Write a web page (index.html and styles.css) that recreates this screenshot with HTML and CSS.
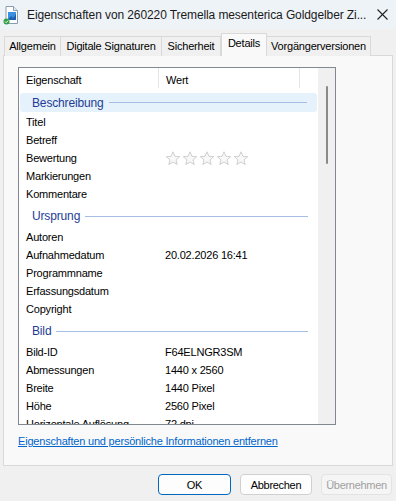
FILE: index.html
```html
<!DOCTYPE html>
<html lang="de">
<head>
    <meta charset="UTF-8">
    <title>Eigenschaften</title>
    <link rel="stylesheet" href="styles.css">
</head>
<body>
    <div class="titlebar">
        <svg class="app-icon" width="16" height="19" viewBox="0 0 16 19">
            <path d="M3 0.5h7.5l4 4v13h-11.5z" fill="#fff" stroke="#8a9bb0"/>
            <path d="M10.5 0.5v4h4" fill="#e6ecf3" stroke="#8a9bb0"/>
            <rect x="5" y="6" width="8" height="8" fill="#3b8fe0"/>
            <path d="M5 14l3-4 2 2 3-4v6z" fill="#1d5fb0"/>
            <circle cx="3.5" cy="15.5" r="3" fill="#2ea043"/>
            <path d="M2 15.5l1.2 1.2 2-2.2" fill="none" stroke="#fff" stroke-width="1"/>
        </svg>
        <span class="title">Eigenschaften von 260220 Tremella mesenterica Goldgelber Zi...</span>
        <svg class="close" width="11" height="11" viewBox="0 0 11 11">
            <path d="M0.5 0.5l10 10M10.5 0.5l-10 10" stroke="#222" stroke-width="1.1"/>
        </svg>
    </div>

    <div class="tabs">
        <div class="tab t1">Allgemein</div>
        <div class="tab t2">Digitale Signaturen</div>
        <div class="tab t3">Sicherheit</div>
        <div class="tab t4 active">Details</div>
        <div class="tab t5">Vorgängerversionen</div>
    </div>

    <div class="panel">
        <div class="list">
            <div class="rows">
                <div class="head">
                    <div class="hcell name">Eigenschaft</div>
                    <div class="hcell val">Wert</div>
                </div>

                <div class="group first hover"><span>Beschreibung</span><i></i></div>
                <div class="row"><span>Titel</span><span></span></div>
                <div class="row"><span>Betreff</span><span></span></div>
                <div class="row"><span>Bewertung</span>
                    <span class="stars">
                        <svg width="84" height="15" viewBox="0 0 84 15">
                            <g fill="#f8f8f8" stroke="#c9c9c9" stroke-width="0.9">
                                <path id="st" d="M7 0.8l1.9 4.5 4.8 0.4-3.7 3.1 1.2 4.7L7 11l-4.2 2.5 1.2-4.7-3.7-3.1 4.8-0.4z"/>
                                <use href="#st" x="17"/>
                                <use href="#st" x="34"/>
                                <use href="#st" x="51"/>
                                <use href="#st" x="68"/>
                            </g>
                        </svg>
                    </span>
                </div>
                <div class="row"><span>Markierungen</span><span></span></div>
                <div class="row"><span>Kommentare</span><span></span></div>

                <div class="group"><span>Ursprung</span><i></i></div>
                <div class="row"><span>Autoren</span><span></span></div>
                <div class="row"><span>Aufnahmedatum</span><span>20.02.2026 16:41</span></div>
                <div class="row"><span>Programmname</span><span></span></div>
                <div class="row"><span>Erfassungsdatum</span><span></span></div>
                <div class="row"><span>Copyright</span><span></span></div>

                <div class="group"><span>Bild</span><i></i></div>
                <div class="row"><span>Bild-ID</span><span>F64ELNGR3SM</span></div>
                <div class="row"><span>Abmessungen</span><span>1440 x 2560</span></div>
                <div class="row"><span>Breite</span><span>1440 Pixel</span></div>
                <div class="row"><span>Höhe</span><span>2560 Pixel</span></div>
                <div class="row"><span>Horizontale Auflösung</span><span>72 dpi</span></div>
            </div>
            <div class="scrollbar"><div class="thumb"></div></div>
        </div>
        <a class="link" href="#">Eigenschaften und persönliche Informationen entfernen</a>
    </div>

    <div class="buttons">
        <button class="btn default">OK</button>
        <button class="btn">Abbrechen</button>
        <button class="btn disabled">Übernehmen</button>
    </div>
</body>
</html>
```

FILE: styles.css
```css
body {
    margin: 0;
    width: 396px;
    height: 501px;
    overflow: hidden;
    background: #f0f0f0;
    font-family: "Liberation Sans", Arial, sans-serif;
    font-size: 11px;
    color: #000;
}
.titlebar {
    height: 29px;
    display: flex;
    align-items: center;
    background: #eef3f8;
}
.app-icon {
    margin-left: 3px;
    margin-top: 1px;
}
.title {
    margin-left: 8px;
    font-size: 12px;
    letter-spacing: -0.1px;
    color: #1a1a1a;
    flex: 1;
    white-space: nowrap;
}
.close {
    margin-right: 8px;
}
.tabs {
    display: flex;
    align-items: flex-end;
    height: 27px;
    padding-left: 4px;
    position: relative;
    z-index: 2;
    margin-bottom: -1px;
}
.tab {
    box-sizing: border-box;
    height: 20px;
    line-height: 18px;
    border: 1px solid #d9d9d9;
    border-bottom: none;
    background: #f0f0f0;
    text-align: center;
    letter-spacing: -0.2px;
    white-space: nowrap;
}
.tab + .tab {
    border-left: none;
}
.t1 { width: 57px; }
.t2 { width: 101px; }
.t3 { width: 59px; }
.t4 { width: 46px; }
.t5 { width: 104px; }
.tab.active {
    height: 23px;
    line-height: 19px;
    background: #f9f9f9;
    border-left: 1px solid #d9d9d9;
}
.tab.active + .tab {
    border-left: none;
}
.panel {
    box-sizing: border-box;
    margin-left: 3px;
    width: 390px;
    height: 411px;
    background: #f9f9f9;
    border: 1px solid #d9d9d9;
    padding: 11px 0 0 14px;
}
.list {
    box-sizing: border-box;
    width: 318px;
    height: 358px;
    border: 1px solid #828790;
    background: #fff;
    display: flex;
    overflow: hidden;
}
.rows {
    flex: 1;
    overflow: hidden;
}
.head {
    display: flex;
    height: 23px;
}
.hcell {
    box-sizing: border-box;
    height: 20px;
    line-height: 24px;
    padding-left: 7px;
    letter-spacing: -0.2px;
    border-right: 1px solid #e5e5e5;
}
.hcell.name { width: 140px; }
.hcell.val { width: 141px; }
.row {
    display: grid;
    grid-template-columns: 139px 1fr;
    height: 18px;
    line-height: 18px;
    padding-left: 7px;
    letter-spacing: -0.2px;
    white-space: nowrap;
}
.stars svg {
    display: block;
    margin: 2px 0 0 1px;
}
.group {
    display: flex;
    align-items: center;
    height: 25px;
    padding: 1px 10px 0 13px;
    box-sizing: border-box;
    font-size: 12px;
    letter-spacing: -0.15px;
    color: #1e3c96;
}
.group i {
    flex: 1;
    height: 1px;
    margin-left: 5px;
    background: #a7bde3;
}
.group.first {
    height: 22px;
    padding-top: 2px;
}
.group.hover {
    background: #e5f1fb;
    margin: 2px 1px 1px 1px;
    height: 19px;
    border-radius: 3px;
    padding: 0 10px 0 12px;
}
.scrollbar {
    width: 17px;
    background: #f0f0f0;
    display: flex;
    justify-content: center;
}
.thumb {
    width: 2px;
    height: 78px;
    margin-top: 18px;
    margin-left: 1px;
    background: #8a8a8a;
    border-radius: 1px;
}
.link {
    display: inline-block;
    margin-top: 10px;
    color: #0066cc;
    letter-spacing: -0.2px;
    font-size: 11px;
}
.buttons {
    display: flex;
    justify-content: flex-end;
    gap: 9px;
    padding: 8px 4px 0 0;
}
.btn {
    box-sizing: border-box;
    width: 72px;
    height: 21px;
    padding: 0;
    font-family: "Liberation Sans", Arial, sans-serif;
    font-size: 11px;
    letter-spacing: -0.3px;
    background: #fdfdfd;
    border: 1px solid #d0d0d0;
    border-radius: 4px;
    color: #000;
}
.btn.default {
    width: 73px;
    border-color: #0067c0;
}
.btn.disabled {
    width: 71px;
    background: #f5f5f5;
    border-color: #e3e3e3;
    color: #a0a0a0;
}
```
